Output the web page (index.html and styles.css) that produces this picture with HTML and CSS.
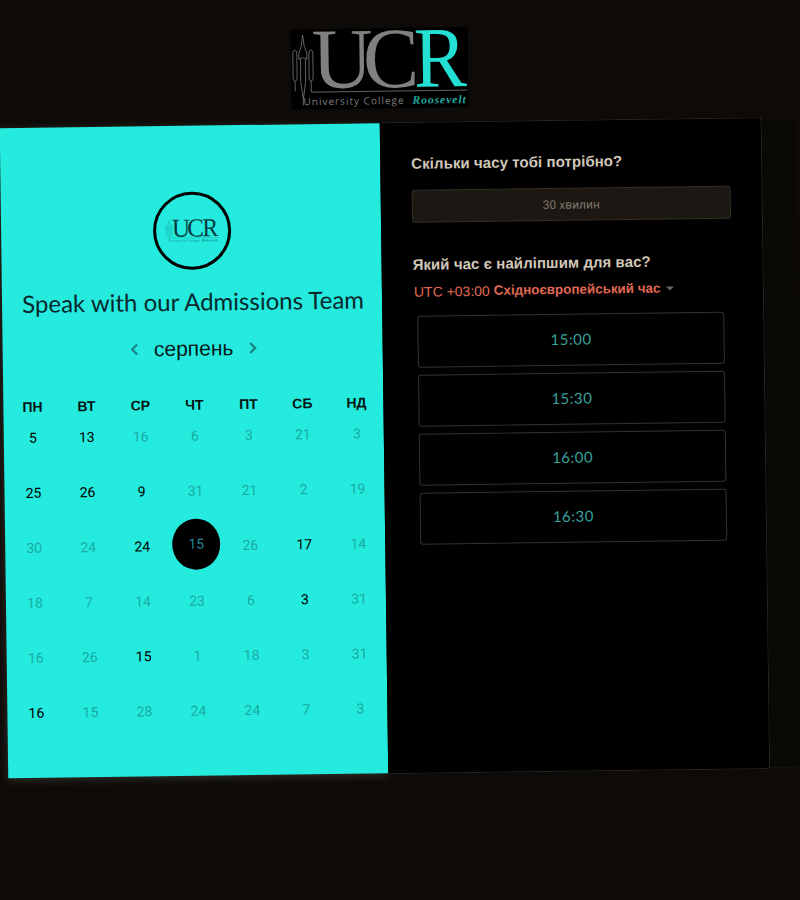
FILE: index.html
```html
<!DOCTYPE html>
<html lang="en">
<head>
    <meta charset="UTF-8">
    <meta name="viewport" content="width=device-width, initial-scale=1.0">
    <title>Speak with our Admissions Team</title>
    <link rel="stylesheet" href="styles.css">
</head>

<body>
    <svg class="defs_holder" width="0" height="0">
        <symbol id="ucr_logo" viewBox="0 0 177 80" overflow="visible">
            <g class="logo_tower">
                <path d="M12 6L10.5 17L8 24V30M12 6L13.5 17L16 24V30M8 30Q12 27 16 30M9.5 30V52M14.5 30V52M9.5 52L12 70L14.5 52M12 70V76"/>
                <path d="M2 24V48Q2 52 4 52Q6 52 6 48V24Q6 21 4 21Q2 21 2 24ZM18 24V48Q18 52 20 52Q22 52 22 48V24Q22 21 20 21Q18 21 18 24Z"/>
                <path d="M4 52V62M20 52V63H176"/>
            </g>
            <text class="logo_uc" transform="translate(21 59) scale(0.98 1)">UC</text>
            <text class="logo_r" transform="translate(123 59) scale(0.92 1)">R</text>
            <text class="logo_small" x="12" y="76">University College</text>
            <text class="logo_roosevelt" x="121" y="76">Roosevelt</text>
        </symbol>
    </svg>

    <div class="page">
        <div class="top_logo">
            <svg class="top_logo_svg" width="177" height="80"><use href="#ucr_logo"/></svg>
        </div>

        <div class="booking">
            <div class="left_panel">
                <div class="round_logo">
                    <svg class="round_logo_svg" width="54" height="24"><use href="#ucr_logo"/></svg>
                </div>
                <h1 class="team_title">Speak with our Admissions Team</h1>
                <div class="month_row">
                    <svg class="month_arrow" width="10" height="14" viewBox="0 0 10 14"><path d="M7.5 2L2.5 7L7.5 12"/></svg>
                    <span class="month_name">серпень</span>
                    <svg class="month_arrow" width="10" height="14" viewBox="0 0 10 14"><path d="M2.5 2L7.5 7L2.5 12"/></svg>
                </div>
                <div class="week_days">
                    <span>ПН</span><span>ВТ</span><span>СР</span><span>ЧТ</span><span>ПТ</span><span>СБ</span><span>НД</span>
                </div>
                <div class="dates">
                    <span class="on">5</span><span class="on">13</span><span>16</span><span>6</span><span>3</span><span>21</span><span>3</span>
                    <span class="on">25</span><span class="on">26</span><span class="on">9</span><span>31</span><span>21</span><span>2</span><span>19</span>
                    <span>30</span><span>24</span><span class="on">24</span><span class="picked"><b>15</b></span><span>26</span><span class="on">17</span><span>14</span>
                    <span>18</span><span>7</span><span>14</span><span>23</span><span>6</span><span class="on">3</span><span>31</span>
                    <span>16</span><span>26</span><span class="on">15</span><span>1</span><span>18</span><span>3</span><span>31</span>
                    <span class="on">16</span><span>15</span><span>28</span><span>24</span><span>24</span><span>7</span><span>3</span>
                </div>
            </div>

            <div class="right_panel">
                <h2 class="question">Скільки часу тобі потрібно?</h2>
                <div class="duration">30 хвилин</div>
                <h2 class="question second">Який час є найліпшим для вас?</h2>
                <div class="zone">UTC +03:00 <b>Східноєвропейський час</b><i class="zone_caret"></i></div>
                <div class="slots">
                    <div class="slot">15:00</div>
                    <div class="slot">15:30</div>
                    <div class="slot">16:00</div>
                    <div class="slot">16:30</div>
                </div>
            </div>

            <div class="side_strip"></div>
        </div>
    </div>
</body>
</html>
```

FILE: styles.css
```css
html, body{
    margin: 0;
    height: 100%;
    overflow: hidden;
    background-color: rgb(13, 10, 7);
}

.defs_holder{
    display: block;
    height: 0;
}

.page{
    width: 800px;
    height: 900px;
    transform: rotate(-0.75deg);
    box-sizing: border-box;
    padding: 28px 0 0 4px;
    --uc_color: rgb(128, 128, 126);
    --r_color: rgb(36, 224, 212);
    --small_color: rgb(125, 125, 122);
    --roosevelt_color: rgb(36, 170, 160);
    --tower_color: rgb(120, 120, 118);
}

.top_logo{
    width: 761px;
    height: 95px;
    display: flex;
    justify-content: center;
}

.top_logo_svg, .round_logo_svg{
    display: block;
    overflow: visible;
}

.top_logo_svg{
    background-color: #000;
}

.logo_tower{
    fill: none;
    stroke: var(--tower_color);
    stroke-width: 0.8;
}

.logo_uc, .logo_r{
    font-family: "Liberation Serif", serif;
    font-size: 86px;
}

.logo_uc{
    letter-spacing: -10px;
    fill: var(--uc_color);
}

.logo_r{
    fill: var(--r_color);
}

.logo_small{
    font-family: "Open Sans", sans-serif;
    font-size: 10px;
    letter-spacing: 1px;
    fill: var(--small_color);
}

.logo_roosevelt{
    font-family: "Liberation Serif", serif;
    font-size: 11.5px;
    font-style: italic;
    font-weight: bold;
    letter-spacing: 1px;
    fill: var(--roosevelt_color);
}

.booking{
    display: flex;
    height: 650px;
}

.left_panel{
    width: 380px;
    flex-shrink: 0;
    background-color: rgb(36, 235, 221);
    display: flex;
    flex-direction: column;
    align-items: center;
    padding: 66px 0 0 2px;
    box-sizing: border-box;
    box-shadow: 0 2px 10px rgba(120, 125, 120, 0.35);
}

.round_logo{
    width: 78px;
    height: 78px;
    border: 3px solid #000;
    border-radius: 50%;
    box-sizing: border-box;
    display: flex;
    align-items: center;
    justify-content: center;
    --uc_color: rgb(6, 60, 65);
    --r_color: rgb(6, 60, 65);
    --small_color: rgb(15, 120, 118);
    --roosevelt_color: rgb(15, 120, 118);
    --tower_color: rgb(15, 120, 115);
}

.team_title{
    font-family: Lato, sans-serif;
    font-weight: 400;
    font-size: 24px;
    line-height: 30px;
    margin: 17px 0 0 0;
    color: rgb(8, 40, 45);
}

.month_row{
    display: flex;
    align-items: center;
    gap: 14px;
    margin-top: 17px;
    height: 30px;
}

.month_name{
    font-family: "Liberation Sans", sans-serif;
    font-size: 21px;
    color: rgb(5, 25, 30);
}

.month_arrow{
    fill: none;
    stroke: rgb(25, 130, 130);
    stroke-width: 2.2;
}

.week_days, .dates{
    width: 378px;
    align-self: flex-start;
    display: grid;
    grid-template-columns: repeat(7, 54px);
    justify-items: center;
    align-items: center;
}

.week_days{
    margin-top: 32.5px;
    height: 14px;
    font-family: "Liberation Sans", sans-serif;
    font-size: 14px;
    font-weight: bold;
    color: rgb(5, 20, 20);
}

.dates{
    margin-top: -2.5px;
    grid-auto-rows: 55px;
    font-family: Roboto, sans-serif;
    font-size: 14px;
    color: rgb(24, 172, 164);
}

.dates .on{
    color: #000;
}

.picked{
    width: 48px;
    height: 51px;
    margin-bottom: 2px;
    padding-bottom: 2px;
    box-sizing: border-box;
    border-radius: 50%;
    background-color: #000;
    display: flex;
    align-items: center;
    justify-content: center;
}

.picked b{
    font-weight: 400;
    color: rgb(38, 130, 150);
}

.right_panel{
    width: 382px;
    flex-shrink: 0;
    margin: -1px 0 -1px 0;
    background-color: #000;
    padding: 30px 0 0 31px;
    box-sizing: border-box;
    border: 1px solid rgb(38, 38, 35);
    border-left: 0;
    border-radius: 0 4px 4px 0;
}

.side_strip{
    flex: 1;
    background-color: rgb(10, 9, 5);
    border-top: 1px solid rgb(20, 19, 15);
    border-bottom: 1px solid rgb(20, 19, 15);
}

.question{
    font-family: "Liberation Sans", sans-serif;
    font-size: 15px;
    letter-spacing: 0.07px;
    line-height: 22px;
    font-weight: bold;
    margin: 0;
    color: rgb(210, 200, 185);
}

.question.second{
    margin-top: 31px;
}

.duration{
    margin-top: 15px;
    height: 33px;
    width: 319px;
    box-sizing: border-box;
    background-color: rgb(28, 23, 18);
    border: 1px solid rgb(50, 46, 40);
    border-radius: 3px;
    display: flex;
    align-items: center;
    justify-content: center;
    font-family: Roboto, sans-serif;
    font-size: 12px;
    color: rgb(125, 118, 106);
}

.zone{
    margin: 6.5px 0 0 1px;
    font-family: "Liberation Sans", sans-serif;
    font-size: 14px;
    line-height: 18px;
    color: rgb(224, 105, 85);
    display: flex;
    align-items: center;
    gap: 4px;
}

.zone b{
    font-size: 13.4px;
}

.zone_caret{
    margin-left: 2px;
    border-left: 4px solid transparent;
    border-right: 4px solid transparent;
    border-top: 4px solid rgb(110, 100, 90);
}

.slots{
    margin: 15.5px 0 0 4px;
    display: flex;
    flex-direction: column;
    gap: 7px;
    width: 307px;
}

.slot{
    height: 52px;
    box-sizing: border-box;
    padding-bottom: 2px;
    border: 1px solid rgb(50, 50, 48);
    border-radius: 3px;
    display: flex;
    align-items: center;
    justify-content: center;
    font-family: Lato, sans-serif;
    font-size: 15px;
    letter-spacing: 0.5px;
    color: rgb(58, 162, 154);
}
```
